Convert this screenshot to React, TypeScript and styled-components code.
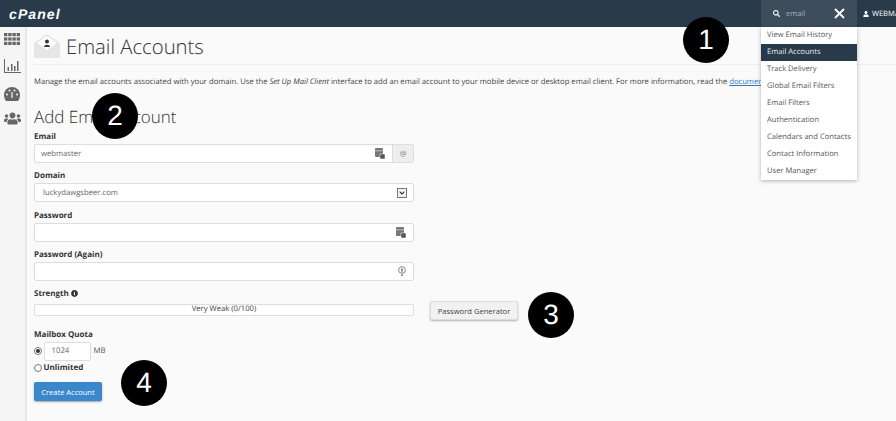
import React from 'react'
import styled, { createGlobalStyle } from 'styled-components'
import { FaSearch, FaUser, FaUsers, FaInfoCircle, FaChevronDown } from 'react-icons/fa'

const Global = createGlobalStyle`
  html, body { margin: 0; padding: 0; height: 100%; overflow: hidden; }
  body {
    font-family: "Open Sans", "Liberation Sans", sans-serif;
    color: #333;
    background: #fafafa;
    text-rendering: geometricPrecision;
  }
`

const Page = styled.div`
  position: relative;
  width: 896px;
  height: 421px;
  overflow: hidden;
  background: #fafafa;
`

const TopBar = styled.header`
  display: flex;
  align-items: stretch;
  height: 27px;
  background: #293a4a;
`

const Logo = styled.div`
  margin: 0 auto 0 9px;
  align-self: center;
  color: #fff;
  font-family: "Liberation Sans", sans-serif;
  font-size: 14px;
  font-weight: 700;
  font-style: italic;
  letter-spacing: 1.1px;
`

const SearchBox = styled.div`
  display: flex;
  align-items: center;
  width: 96px;
  padding-left: 12px;
  box-sizing: border-box;
  background: #3d4d5c;
  color: #fff;
  font-size: 7.5px;
`

const SearchText = styled.span`
  margin-left: 6px;
  color: #aab3bb;
`

const Close = styled.svg`
  margin-left: auto;
  margin-right: 12px;
  width: 11px;
  height: 11px;
`

const UserBox = styled.div`
  display: flex;
  align-items: center;
  gap: 3px;
  width: 39px;
  padding-left: 6px;
  box-sizing: border-box;
  overflow: hidden;
  color: #fff;
  font-size: 7.5px;
  white-space: nowrap;

  svg {
    flex: none;
  }
`

const Body = styled.div`
  display: flex;
  height: 394px;
`

const Side = styled.nav`
  flex: 0 0 27px;
  display: flex;
  flex-direction: column;
  box-sizing: border-box;
  background: #f5f5f5;
  border-right: 2px solid #e8e8e8;
  color: #666;
`

const SideItem = styled.div<{ $h: number }>`
  display: flex;
  align-items: center;
  justify-content: center;
  height: ${(p) => p.$h}px;
  padding-right: 1px;
`

const Main = styled.main`
  flex: 1;
  min-width: 0;
  padding: 0 0 0 7px;
`

const TitleRow = styled.div`
  display: flex;
  align-items: center;
  gap: 6px;
  height: 37px;
  border-bottom: 1px solid #eee;
`

const Title = styled.h1`
  margin: 0;
  font-size: 20.3px;
  font-weight: 300;
  line-height: 26px;
  color: #333;
`

const Lead = styled.p`
  margin: 11px 0 0;
  font-size: 7.67px;
  line-height: 12px;
  white-space: nowrap;
  color: #444;
`

const DocLink = styled.a`
  color: #337ab7;
  text-decoration: underline;
`

const Sub = styled.h2`
  margin: 17px 0 0;
  font-size: 17px;
  font-weight: 300;
  line-height: 24px;
  color: #333;
`

const Form = styled.form`
  display: flex;
  flex-direction: column;
  width: 380px;
  margin-top: 1px;
`

const Label = styled.label`
  display: flex;
  align-items: center;
  gap: 2px;
  height: 13px;
  margin-bottom: 1px;
  font-size: 8px;
  font-weight: 700;
  color: #333;
`

const Group = styled.div<{ $gap?: number }>`
  margin-bottom: ${(p) => p.$gap ?? 6.3}px;
`

const Field = styled.div`
  display: flex;
  align-items: center;
  height: 19px;
  box-sizing: border-box;
  background: #fff;
  border: 1px solid #ddd;
  border-radius: 2px;
  padding-left: 6px;
  font-size: 7.7px;
  color: #666;
`

const FieldText = styled.span<{ $indent?: number }>`
  flex: 1;
  padding-left: ${(p) => p.$indent ?? 0}px;
`

const Addon = styled.div`
  display: flex;
  align-items: center;
  justify-content: center;
  width: 20px;
  align-self: stretch;
  background: #eee;
  border-left: 1px solid #ddd;
  color: #777;
  font-size: 7.5px;
`

const IconSlot = styled.span`
  display: flex;
  margin-right: 7px;
  color: #777;
`

const Caret = styled.span`
  display: flex;
  align-items: center;
  justify-content: center;
  width: 10px;
  height: 10px;
  margin-right: 6px;
  box-sizing: border-box;
  background: #f2f2f2;
  border: 1px solid #777;
  color: #222;
`

const StrengthRow = styled.div`
  display: flex;
  align-items: flex-start;
  width: 484px;
`

const Meter = styled.div`
  flex: 0 0 380px;
  height: 12px;
  margin-top: 3px;
  box-sizing: border-box;
  background: #fff;
  border: 1px solid #ddd;
  border-radius: 2px;
  font-size: 7.7px;
  line-height: 9px;
  text-align: center;
  color: #444;
`

const GenButton = styled.button`
  margin-left: 16px;
  width: 88px;
  height: 19px;
  padding: 0;
  background: #f1f1f1;
  border: 1px solid #ddd;
  border-radius: 2px;
  box-shadow: 0 1px 2px rgba(0, 0, 0, 0.3);
  font: 400 7.6px "Open Sans", sans-serif;
  color: #444;
`

const QuotaRow = styled.div`
  display: flex;
  align-items: center;
  font-size: 7.8px;
  color: #555;
`

const Radio = styled.span<{ $on?: boolean }>`
  display: flex;
  align-items: center;
  justify-content: center;
  width: 6px;
  height: 6px;
  margin-right: 1.5px;
  background: #fff;
  border: 1px solid #777;
  border-radius: 50%;

  &::after {
    content: '';
    width: 4px;
    height: 4px;
    border-radius: 50%;
    background: ${(p) => (p.$on ? '#333' : 'transparent')};
  }
`

const QuotaInput = styled.div`
  width: 47px;
  height: 19px;
  line-height: 17px;
  box-sizing: border-box;
  margin-right: 3px;
  padding-left: 7px;
  background: #fff;
  border: 1px solid #ddd;
  border-radius: 2px;
  color: #666;
`

const Unlimited = styled.div`
  display: flex;
  align-items: center;
  height: 14px;
  font-size: 8px;
  font-weight: 700;
  color: #333;
`

const Submit = styled.button`
  width: 68px;
  height: 19px;
  margin-top: 7.5px;
  padding: 0;
  background: #3a87cc;
  border: 0;
  border-radius: 2px;
  box-shadow: 0 1px 2px rgba(0, 0, 0, 0.35);
  font: 400 7.5px "Open Sans", sans-serif;
  color: #fff;
`

const Menu = styled.ul`
  position: absolute;
  top: 27px;
  left: 761px;
  width: 96px;
  height: 153px;
  margin: 0;
  padding: 0;
  list-style: none;
  background: #fff;
  box-shadow: 0 1px 4px rgba(0, 0, 0, 0.3);
`

const MenuItem = styled.li<{ $active?: boolean }>`
  height: 17px;
  line-height: 16px;
  padding-left: 6px;
  font-size: 7.6px;
  white-space: nowrap;
  background: ${(p) => (p.$active ? '#293a4a' : 'transparent')};
  color: ${(p) => (p.$active ? '#e8ebee' : '#555')};
`

const Badge = styled.div<{ $x: number; $y: number }>`
  position: absolute;
  left: ${(p) => p.$x}px;
  top: ${(p) => p.$y}px;
  width: 46px;
  height: 46px;
  border-radius: 50%;
  background: #000;
  color: #fff;
  font: 400 28px/46px "Liberation Sans", Arial, sans-serif;
  text-align: center;
`

const Mail = () => (
  <svg width="26" height="24" viewBox="0 0 26 24">
    <path d="M0 9 13 0l13 9v15H0z" fill="#e6e6e6" />
    <path d="M3 9 13 2l10 7-10 7z" fill="#fff" />
    <circle cx="13" cy="7.5" r="2" fill="#293a4a" />
    <path d="M10 13c0-3 6-3 6 0z" fill="#293a4a" />
  </svg>
)

const Grid = () => (
  <svg width="16" height="12" viewBox="0 0 16 12" fill="#666">
    {[0, 4.4, 8.8].map((y) =>
      [0, 4.2, 8.4, 12.6].map((x) => <rect key={`${x}-${y}`} x={x} y={y} width="3.4" height="3.2" />)
    )}
  </svg>
)

const Stats = () => (
  <svg width="17" height="14" viewBox="0 0 17 14" fill="#666">
    <path d="M0 0h1v13h16v1H0z" />
    <rect x="3.5" y="8" width="1.5" height="4" />
    <rect x="7" y="5" width="1.5" height="7" />
    <rect x="10" y="7" width="1.5" height="5" />
    <rect x="13" y="2" width="1.5" height="10" />
  </svg>
)

const Gauge = () => (
  <svg width="16" height="14" viewBox="0 0 16 14" fill="#666">
    <path d="M8 0a8 8 0 0 1 8 8c0 2-.6 4-2 6H2C.6 12 0 10 0 8a8 8 0 0 1 8-8z" />
    <path d="M8 11 8 5" stroke="#f5f5f5" strokeWidth="1.2" />
    <circle cx="3" cy="7.5" r="1" fill="#f5f5f5" />
    <circle cx="5.5" cy="3.5" r="1" fill="#f5f5f5" />
    <circle cx="10.5" cy="3.5" r="1" fill="#f5f5f5" />
    <circle cx="13" cy="7.5" r="1" fill="#f5f5f5" />
  </svg>
)

const Generate = () => (
  <svg width="10" height="11" viewBox="0 0 10 11">
    <rect width="8" height="9" rx="1" fill="#777" />
    <path d="M0 2.8h8" stroke="#eee" strokeWidth="0.6" />
    <rect x="5" y="6" width="5" height="5" fill="#555" stroke="#fff" strokeWidth="0.5" />
  </svg>
)

const Shield = () => (
  <svg width="8" height="10" viewBox="0 0 8 10" fill="none">
    <circle cx="4" cy="4" r="3.4" stroke="#888" strokeWidth="1" />
    <circle cx="4" cy="3.4" r="1.1" fill="#888" />
    <path d="M3.4 4h1.2v2.6H3.4zM3 8.5h2V10H3z" fill="#888" />
  </svg>
)

const menu = [
  'View Email History',
  'Email Accounts',
  'Track Delivery',
  'Global Email Filters',
  'Email Filters',
  'Authentication',
  'Calendars and Contacts',
  'Contact Information',
  'User Manager'
]

const App = () => (
  <Page>
    <Global />
    <TopBar>
      <Logo>cPanel</Logo>
      <SearchBox>
        <FaSearch size={7} />
        <SearchText>email</SearchText>
        <Close viewBox="0 0 11 11">
          <path d="M1 1l9 9M10 1l-9 9" stroke="#fff" strokeWidth="1.8" />
        </Close>
      </SearchBox>
      <UserBox>
        <FaUser size={6} />
        WEBMASTER
      </UserBox>
    </TopBar>
    <Body>
      <Side>
        <SideItem $h={24}>
          <Grid />
        </SideItem>
        <SideItem $h={30}>
          <Stats />
        </SideItem>
        <SideItem $h={25}>
          <Gauge />
        </SideItem>
        <SideItem $h={25}>
          <FaUsers size={17} />
        </SideItem>
      </Side>
      <Main>
        <TitleRow>
          <Mail />
          <Title>Email Accounts</Title>
        </TitleRow>
        <Lead>
          Manage the email accounts associated with your domain. Use the <em>Set Up Mail Client</em> interface to add an
          email account to your mobile device or desktop email client. For more information, read the{' '}
          <DocLink>documentation</DocLink>.
        </Lead>
        <Sub>Add Email Account</Sub>
        <Form>
          <Group>
            <Label>Email</Label>
            <Field>
              <FieldText>webmaster</FieldText>
              <IconSlot>
                <Generate />
              </IconSlot>
              <Addon>@</Addon>
            </Field>
          </Group>
          <Group>
            <Label>Domain</Label>
            <Field>
              <FieldText $indent={2}>luckydawgsbeer.com</FieldText>
              <Caret>
                <FaChevronDown size={6} />
              </Caret>
            </Field>
          </Group>
          <Group>
            <Label>Password</Label>
            <Field>
              <FieldText />
              <IconSlot>
                <Generate />
              </IconSlot>
            </Field>
          </Group>
          <Group>
            <Label>Password (Again)</Label>
            <Field>
              <FieldText />
              <IconSlot>
                <Shield />
              </IconSlot>
            </Field>
          </Group>
          <Group $gap={7.5}>
            <Label>
              Strength <FaInfoCircle size={7} />
            </Label>
            <StrengthRow>
              <Meter>Very Weak (0/100)</Meter>
              <GenButton type="button">Password Generator</GenButton>
            </StrengthRow>
          </Group>
          <Label>Mailbox Quota</Label>
          <QuotaRow>
            <Radio $on />
            <QuotaInput>1024</QuotaInput>
            MB
          </QuotaRow>
          <Unlimited>
            <Radio />
            Unlimited
          </Unlimited>
          <Submit type="button">Create Account</Submit>
        </Form>
      </Main>
    </Body>
    <Menu>
      {menu.map((item) => (
        <MenuItem key={item} $active={item === 'Email Accounts'}>
          {item}
        </MenuItem>
      ))}
    </Menu>
    <Badge $x={683} $y={17}>1</Badge>
    <Badge $x={92} $y={93}>2</Badge>
    <Badge $x={528} $y={292}>3</Badge>
    <Badge $x={121} $y={360}>4</Badge>
  </Page>
)

export default App
